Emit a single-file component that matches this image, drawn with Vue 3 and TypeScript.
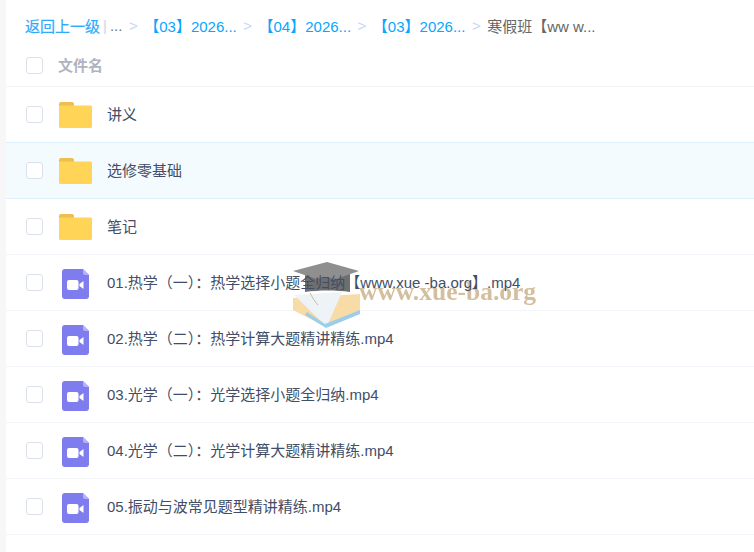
<script setup lang="ts">
interface Row { name: string; type: 'folder' | 'video'; active?: boolean }
const rows: Row[] = [
  { name: '讲义', type: 'folder' },
  { name: '选修零基础', type: 'folder', active: true },
  { name: '笔记', type: 'folder' },
  { name: '01.热学（一）：热学选择小题全归纳【www.xue -ba.org】.mp4', type: 'video' },
  { name: '02.热学（二）：热学计算大题精讲精练.mp4', type: 'video' },
  { name: '03.光学（一）：光学选择小题全归纳.mp4', type: 'video' },
  { name: '04.光学（二）：光学计算大题精讲精练.mp4', type: 'video' },
  { name: '05.振动与波常见题型精讲精练.mp4', type: 'video' },
]
const crumbs = ['【03】2026...', '【04】2026...', '【03】2026...']
</script>

<template>
  <div class="page">
    <div class="panel">
      <div class="crumbs">
        <span class="link back">返回上一级</span>
        <span class="bar">|</span>
        <span class="dots">...</span>
        <template v-for="(c, i) in crumbs" :key="i">
          <span class="sep">&gt;</span>
          <span class="link crumb">{{ c }}</span>
        </template>
        <span class="sep">&gt;</span>
        <span class="current">寒假班【ww w...</span>
      </div>
      <div class="head">
        <span class="check"></span>
        <span class="head-label">文件名</span>
      </div>
      <div v-for="r in rows" :key="r.name" class="row" :class="{ active: r.active }">
        <span class="check"></span>
        <span class="icon">
          <svg v-if="r.type === 'folder'" width="33" height="26" viewBox="0 0 33 26">
            <path d="M0 2a2 2 0 0 1 2-2h11a2 2 0 0 1 2 2v2H0z" fill="#EDBF4E" />
            <path d="M0 5a1.500 1.500 0 0 1 1.500-1.500h30A1.500 1.500 0 0 1 33 5v19.500a1.500 1.500 0 0 1-1.500 1.500h-30A1.500 1.500 0 0 1 0 24.500z" fill="#FFD457" />
          </svg>
          <svg v-else class="video" width="27" height="30" viewBox="0 0 27 30">
            <path d="M3 0h18l6 6v21a3 3 0 0 1-3 3H3a3 3 0 0 1-3-3V3a3 3 0 0 1 3-3z" fill="#7F7CEE" />
            <path d="M21 0l6 6h-4a2 2 0 0 1-2-2z" fill="#B5B3F6" />
            <rect x="5" y="11" width="11.500" height="10" rx="2" fill="#fff" />
            <path d="M17.500 15l4-3v8l-4-3z" fill="#fff" />
          </svg>
        </span>
        <span class="name">{{ r.name }}</span>
      </div>
    </div>
    <div class="mark">
      <svg class="mark-art" width="68" height="66" viewBox="0 0 68 66">
        <path d="M1 36L68 32V52L34 65L1 48z" fill="#F8DCA8" />
        <path d="M2 33L50 30L36 62L33 63z" fill="#EEF3F8" />
        <path d="M15 50L33 62L68 48V52L34 66L13 53z" fill="#9CCDEA" />
        <path d="M18 31c2 4 5 9 8 12" fill="none" stroke="#CDBB98" stroke-width="1" />
        <path d="M13 11h45v19c-13-2-32-2-45 0z" fill="#6E6E6E" />
        <path d="M35 0L67 9L44 17c-7-2-14-2-20 0L1 9z" fill="#8F8F8F" />
      </svg>
      <span class="mark-text">www.xue-ba.org</span>
    </div>
  </div>
</template>

<style scoped>
.page {
  position: relative;
  width: 754px;
  height: 552px;
  overflow: hidden;
  background: #f7f7f7;
  font-family: "Liberation Sans", "Noto Sans CJK SC", sans-serif;
  font-size: 15px;
  padding-left: 6px;
  box-sizing: border-box;
}
.panel {
  height: 100%;
  background: #fff;
}
.crumbs {
  height: 44px;
  padding: 6px 0 0 19px;
  box-sizing: border-box;
  display: flex;
  align-items: center;
  white-space: nowrap;
  color: #666;
}
.link { color: #06a7ff; }
.back { color: #2fa9fb; -webkit-text-stroke: 0.2px #2fa9fb; }
.bar { color: #c9d6ee; margin-left: 3px; }
.dots { color: #777; margin-left: 3px; }
.sep { color: #c4d8f4; margin: 0 6.5px; }
.current { color: #666; }
.head {
  height: 43px;
  display: flex;
  align-items: center;
  padding-left: 20px;
  border-bottom: 1px solid #f2f4f8;
  box-sizing: border-box;
}
.head-label {
  margin-left: 15px;
  color: #afb3bf;
  font-weight: 700;
  padding-bottom: 2px;
}
.check {
  width: 17px;
  height: 17px;
  box-sizing: border-box;
  border: 1px solid #dbe0ea;
  border-radius: 3px;
  background: #fff;
  flex: none;
}
.row {
  height: 56px;
  display: flex;
  align-items: center;
  padding-left: 20px;
  border-bottom: 1px solid #f2f6fb;
  box-sizing: border-box;
}
.row.active {
  background: #f4fbff;
  border-bottom-color: #dff0fc;
  box-shadow: 0 -1px 0 #dff0fc;
}
.icon {
  width: 33px;
  margin-left: 16px;
  display: flex;
  justify-content: center;
  flex: none;
}
.video { margin-top: 2px; }
.name {
  position: relative;
  z-index: 2;
  margin-left: 15px;
  padding-bottom: 2px;
  color: #424e67;
}
.mark {
  position: absolute;
  z-index: 1;
  left: 292px;
  top: 262px;
  display: flex;
  pointer-events: none;
}
.mark-art { filter: blur(0.5px); }
.mark-text {
  margin-left: -1px;
  margin-top: 15px;
  line-height: 30px;
  height: 30px;
  font-family: "Liberation Serif", serif;
  font-weight: 700;
  font-size: 25.5px;
  color: #d3bf9e;
  filter: blur(0.4px);
}
</style>

<style>
html, body { margin: 0; background: #fff; }
</style>
